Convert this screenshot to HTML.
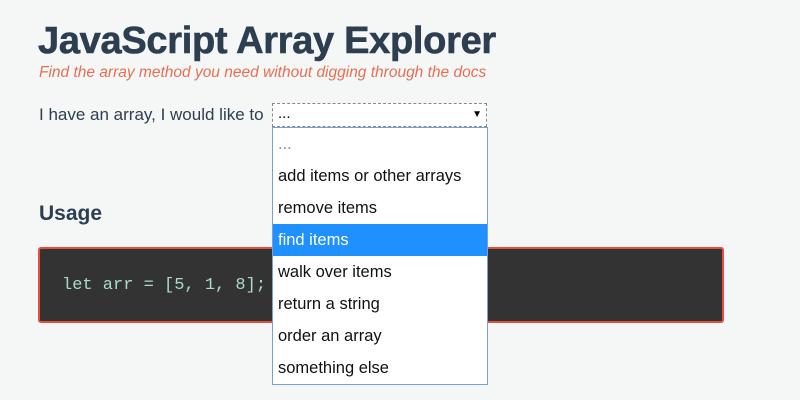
<!DOCTYPE html>
<html><head><style>
html,body{margin:0;padding:0;background:#f5f7f7;width:800px;height:400px;overflow:hidden;font-family:"Liberation Sans",sans-serif;}
.t{position:absolute;left:38px;top:20px;font-size:38px;font-weight:bold;color:#2c3e50;letter-spacing:-0.3px;white-space:nowrap;-webkit-text-stroke:0.6px #2c3e50;}
.s{position:absolute;left:39px;top:64px;font-size:15.5px;font-style:italic;color:#e76f51;white-space:nowrap;}
.l{position:absolute;left:39px;top:105px;font-size:17px;color:#2c3e50;white-space:nowrap;}
.sel{position:absolute;left:272px;top:103px;width:213px;height:22px;border:1px dashed #888;background:#fff;font-size:15px;}
.sel span{position:absolute;left:5px;top:1px;}
.sel i{position:absolute;right:4px;top:5px;font-style:normal;font-size:10px;}
.dd{position:absolute;left:272px;top:127px;width:214px;height:256px;border:1px solid #7a9fd6;background:#fff;}
.dd div{height:32px;line-height:32px;padding-left:5px;font-size:16.5px;color:#111;}
.dd .h{background:#1e90ff;color:#fff;}
.u{position:absolute;left:39px;top:202px;font-size:21px;font-weight:bold;color:#2c3e50;}
.c{position:absolute;left:38px;top:247px;width:682px;height:72px;background:#333;border:2px solid #e74c3c;border-radius:3px;}
.c span{position:absolute;left:22px;top:27px;font-family:"Liberation Mono",monospace;font-size:17px;color:#a8dcc8;}
</style></head><body>
<div class="t">JavaScript Array Explorer</div>
<div class="s">Find the array method you need without digging through the docs</div>
<div class="l">I have an array, I would like to</div>
<div class="u">Usage</div>
<div class="c"><span>let arr = [5, 1, 8];</span></div>
<div class="sel"><span>...</span><i>▼</i></div>
<div class="dd">
<div style="color:#888">...</div>
<div>add items or other arrays</div>
<div>remove items</div>
<div class="h">find items</div>
<div>walk over items</div>
<div>return a string</div>
<div>order an array</div>
<div>something else</div>
</div>
</body></html>
